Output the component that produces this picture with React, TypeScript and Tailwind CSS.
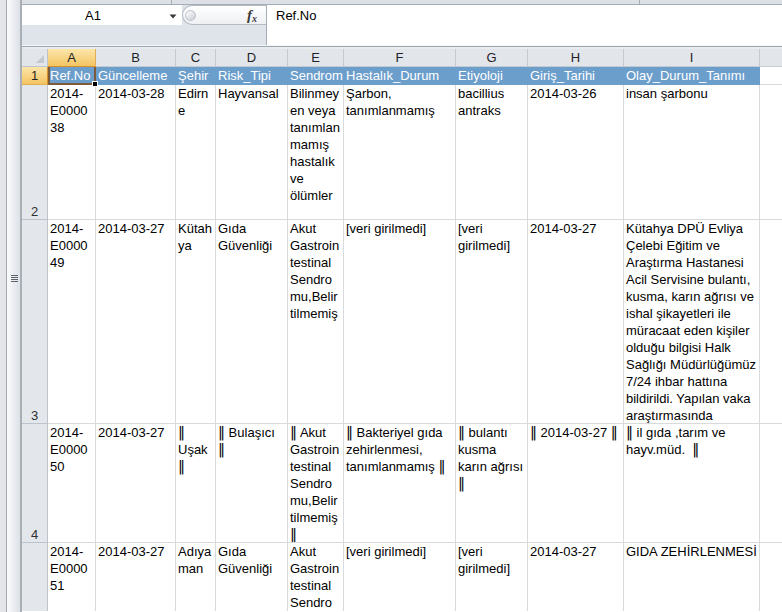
const COL_LETTERS = ["A", "B", "C", "D", "E", "F", "G", "H", "I"];

const HEADERS = [
  "Ref.No",
  "Güncelleme",
  "Şehir",
  "Risk_Tipi",
  "Sendrom",
  "Hastalık_Durum",
  "Etiyoloji",
  "Giriş_Tarihi",
  "Olay_Durum_Tanımı",
];

// each cell is given as the lines Excel wrapped it into
const ROWS: { num: string; cells: string[][] }[] = [
  {
    num: "2",
    cells: [
      ["2014-", "E0000", "38"],
      ["2014-03-28"],
      ["Edirn", "e"],
      ["Hayvansal"],
      ["Bilinmey", "en veya", "tanımlan", "mamış", "hastalık", "ve", "ölümler"],
      ["Şarbon,", "tanımlanmamış"],
      ["bacillius", "antraks"],
      ["2014-03-26"],
      ["insan şarbonu"],
    ],
  },
  {
    num: "3",
    cells: [
      ["2014-", "E0000", "49"],
      ["2014-03-27"],
      ["Kütah", "ya"],
      ["Gıda", "Güvenliği"],
      ["Akut", "Gastroin", "testinal", "Sendro", "mu,Belir", "tilmemiş"],
      ["[veri girilmedi]"],
      ["[veri", "girilmedi]"],
      ["2014-03-27"],
      [
        "Kütahya DPÜ Evliya",
        "Çelebi Eğitim ve",
        "Araştırma Hastanesi",
        "Acil Servisine bulantı,",
        "kusma, karın ağrısı ve",
        "ishal şikayetleri ile",
        "müracaat eden kişiler",
        "olduğu bilgisi Halk",
        "Sağlığı Müdürlüğümüz",
        "7/24 ihbar hattına",
        "bildirildi. Yapılan vaka",
        "araştırmasında",
      ],
    ],
  },
  {
    num: "4",
    cells: [
      ["2014-", "E0000", "50"],
      ["2014-03-27"],
      ["‖", "Uşak", "‖"],
      ["‖ Bulaşıcı", "‖"],
      ["‖ Akut", "Gastroin", "testinal", "Sendro", "mu,Belir", "tilmemiş", "‖"],
      ["‖ Bakteriyel gıda", "zehirlenmesi,", "tanımlanmamış ‖"],
      ["‖ bulantı", "kusma", "karın ağrısı", "‖"],
      ["‖ 2014-03-27 ‖"],
      ["‖ il gıda ,tarım ve", "hayv.müd.  ‖"],
    ],
  },
  {
    num: "5",
    cells: [
      ["2014-", "E0000", "51"],
      ["2014-03-27"],
      ["Adıya", "man"],
      ["Gıda", "Güvenliği"],
      ["Akut", "Gastroin", "testinal", "Sendro", "mu,Belir", "tilmemiş"],
      ["[veri girilmedi]"],
      ["[veri", "girilmedi]"],
      ["2014-03-27"],
      ["GIDA ZEHİRLENMESİ"],
    ],
  },
];

function LeftStrip() {
  return (
    <div className="w-[22px] h-full flex shrink-0">
      <div className="w-[6px] bg-[#e3e5e8]" />
      <div className="w-[1px] bg-[#a3a8ae]" />
      <div className="w-[13px] bg-gradient-to-r from-[#fafbfc] to-[#dde1e6] flex flex-col items-center">
        <div className="h-[275px]" />
        <div className="flex flex-col gap-[1px] ml-[1px]">
          <div className="w-[7px] h-[1px] bg-[#5f646b]" />
          <div className="w-[7px] h-[1px] bg-[#5f646b]" />
          <div className="w-[7px] h-[1px] bg-[#5f646b]" />
          <div className="w-[7px] h-[1px] bg-[#5f646b]" />
        </div>
      </div>
      <div className="w-[2px] bg-[#a9afb7]" />
    </div>
  );
}

function FormulaBar() {
  return (
    <div>
      <div className="h-[5px] flex bg-[#dde1e6] border-b border-[#a4acb6]">
        <div className="w-[150px] border-r border-[#a4acb6]" />
        <div className="w-[468px] border-r border-[#a4acb6]" />
        <div className="flex-1" />
      </div>
      <div className="h-[40px] flex">
        <div className="w-[244px] flex flex-col">
          <div className="h-[20px] flex">
            <div className="w-[160px] bg-white flex items-center">
              <div className="w-[142px] text-center text-[13px] leading-[17px] text-black">A1</div>
              <svg width="18" height="20" viewBox="0 0 18 20">
                <polygon points="5.5,14 12.5,14 9,18" fill="#3a3a3a" transform="translate(0,-4.5)" />
              </svg>
            </div>
            <div className="flex-1 bg-[#dfe4ea]">
              <div className="h-full rounded-l-[10px] border border-r-0 border-[#b4bbc4] bg-gradient-to-b from-white to-[#eef0f3] flex items-center">
                <div className="ml-[2px] w-[11px] h-[11px] rounded-full border border-[#b9bfc7] bg-gradient-to-br from-white to-[#c9ced5]" />
                <div className="flex-1" />
                <span className="mr-[9px] font-['Liberation_Serif',serif] italic font-bold text-[15px] leading-none text-[#3c3c3c]">
                  f<span className="text-[10px] relative top-[2px]">x</span>
                </span>
              </div>
            </div>
          </div>
          <div className="h-[20px] bg-[#dfe4ea]" />
        </div>
        <div className="flex-1 bg-white border-l border-[#a4acb6] pl-[9px] pt-[2px] text-[13px] leading-[17px] text-black">
          Ref.No
        </div>
      </div>
      <div className="h-[1px] bg-[#f4f6f8]" />
      <div className="h-[1px] bg-[#9ea6b0]" />
      <div className="h-[2px] bg-[#e9ecef]" />
    </div>
  );
}

// the double bar comes from a fallback font in Excel, so give it one explicitly
function Line({ text }: { text: string }) {
  const parts = text.split("‖");
  return (
    <div className="whitespace-pre">
      {parts.map((p, i) => (
        <span key={i}>
          {i > 0 && <span className="font-['DejaVu_Sans',sans-serif] text-[14px] leading-[0]">‖</span>}
          {p}
        </span>
      ))}
    </div>
  );
}

function Cell({ lines }: { lines: string[] }) {
  return (
    <div className="border-r border-b border-[#d9dadb] px-[2px] overflow-hidden text-black">
      {lines.map((line, i) => (
        <Line key={i} text={line} />
      ))}
    </div>
  );
}

function RowHeader({ num }: { num: string }) {
  return (
    <div className="bg-[#e3e7ec] border-r border-b border-[#bcc3cc] flex items-end justify-center leading-[14px] text-[#2f2f2f] overflow-hidden">
      {num}
    </div>
  );
}

function Sheet() {
  return (
    <div className="h-[562px] overflow-hidden">
      <div className="grid grid-cols-[26px_48px_80px_40px_72px_56px_112px_72px_96px_136px_1fr] grid-rows-[18px_18px_135px_204px_119px_119px] text-[13px] leading-[17px]">
        {/* column headers */}
        <div className="bg-[#e2e6eb] border-r border-b border-[#bcc3cc] flex items-end justify-end pr-[3px] pb-[3px]">
          <svg width="8" height="8" viewBox="0 0 8 8">
            <polygon points="8,0 8,8 0,8" fill="#c3c8cf" />
          </svg>
        </div>
        {COL_LETTERS.map((c, i) => (
          <div
            key={c}
            className={
              i === 0
                ? "bg-gradient-to-b from-[#fce6a9] to-[#f4c461] border-r border-b border-r-[#e2ad55] border-b-[#d8902c] text-center text-[#1f2328]"
                : "bg-[#e2e6eb] border-r border-b border-[#c3cad2] text-center text-[#1f2328]"
            }
          >
            {c}
          </div>
        ))}
        <div className="bg-[#e2e6eb] border-b border-[#c3cad2]" />

        {/* row 1: table header */}
        <div className="bg-gradient-to-b from-[#fce6a9] to-[#f4c461] border-r border-b border-r-[#d8902c] border-b-[#e2ad55] flex items-center justify-center text-[#1f2328]">
          1
        </div>
        {HEADERS.map((h, i) =>
          i === 0 ? (
            <div
              key={h}
              className="relative z-10 bg-[#6c9ecb] text-white border-l-2 border-r-2 border-b-2 border-[#7d5b3a] pl-0 whitespace-nowrap"
            >
              {h}
              <div className="absolute right-[-4px] bottom-[-4px] w-[6px] h-[6px] bg-black border border-white" />
            </div>
          ) : (
            <div key={h} className="bg-[#6c9ecb] text-white px-[2px] whitespace-nowrap overflow-hidden">
              {h}
            </div>
          )
        )}
        <div className="border-b border-[#d9dadb]" />

        {/* data rows */}
        {ROWS.map((row) => [
          <RowHeader key={row.num + "h"} num={row.num === "5" ? "" : row.num} />,
          ...row.cells.map((lines, i) => <Cell key={row.num + "-" + i} lines={lines} />),
          <div key={row.num + "j"} className="border-b border-[#d9dadb]" />,
        ])}
      </div>
    </div>
  );
}

export default function App() {
  return (
    <div className="w-[782px] h-[612px] overflow-hidden flex bg-white font-['Liberation_Sans',Arial,sans-serif]">
      <LeftStrip />
      <div className="flex-1 flex flex-col min-w-0">
        <FormulaBar />
        <Sheet />
      </div>
    </div>
  );
}
